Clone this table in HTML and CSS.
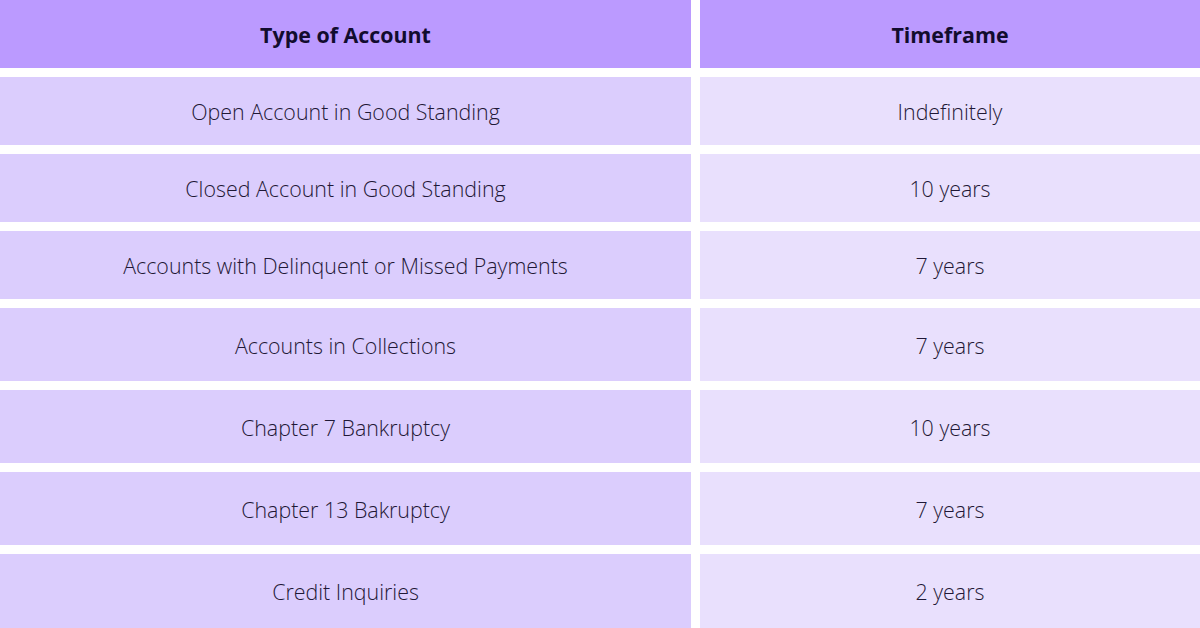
FILE: index.html
```html
<!DOCTYPE html>
<html>
<head>
<meta charset="utf-8">
<link rel="stylesheet" href="styles.css">
</head>
<body>
<div class="table">
  <div class="cell head">Type of Account</div>
  <div class="cell head">Timeframe</div>
  <div class="cell left">Open Account in Good Standing</div>
  <div class="cell right">Indefinitely</div>
  <div class="cell left">Closed Account in Good Standing</div>
  <div class="cell right">10 years</div>
  <div class="cell left">Accounts with Delinquent or Missed Payments</div>
  <div class="cell right">7 years</div>
  <div class="cell left">Accounts in Collections</div>
  <div class="cell right">7 years</div>
  <div class="cell left">Chapter 7 Bankruptcy</div>
  <div class="cell right">10 years</div>
  <div class="cell left">Chapter 13 Bakruptcy</div>
  <div class="cell right">7 years</div>
  <div class="cell left">Credit Inquiries</div>
  <div class="cell right">2 years</div>
</div>
</body>
</html>
```
FILE: styles.css
```css
html, body {
  margin: 0;
  padding: 0;
  background: #ffffff;
}
body {
  width: 1200px;
  height: 628px;
  overflow: hidden;
  font-family: "Open Sans", "Liberation Sans", sans-serif;
}
.table {
  display: grid;
  grid-template-columns: 691px 500px;
  grid-template-rows: 68px 68px 68px 68px 73px 73px 73px 74px;
  column-gap: 9px;
  row-gap: 9px;
}
.cell {
  display: flex;
  align-items: center;
  justify-content: center;
  font-size: 21.4px;
  font-weight: 300;
  color: #1f1836;
  padding-top: 1px;
}
.head {
  background: #bb9aff;
  font-weight: 700;
  color: #120c2e;
  padding-top: 0;
}
.left {
  background: #dbcdfd;
}
.right {
  background: #e9e0fd;
}
```
